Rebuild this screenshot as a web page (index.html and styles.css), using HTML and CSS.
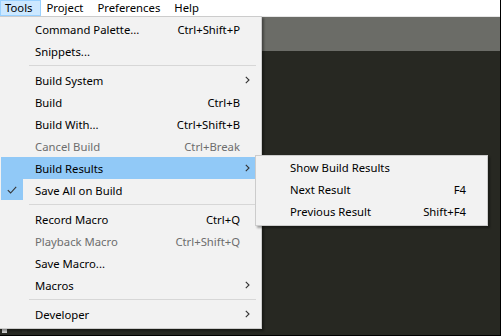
FILE: index.html
```html
<!DOCTYPE html>
<html lang="en">
<head>
  <meta charset="UTF-8">
  <title>Tools menu</title>
  <link rel="stylesheet" href="styles.css">
</head>
<body>
  <div class="window">
    <div class="menubar">
      <span class="menubar-item active">Tools</span>
      <span class="menubar-item">Project</span>
      <span class="menubar-item">Preferences</span>
      <span class="menubar-item">Help</span>
    </div>
    <div class="tabbar"></div>
    <div class="editor">
      <span class="corner"></span>
    </div>

    <div class="menu main-menu">
      <div class="item"><span class="label">Command Palette...</span><span class="key">Ctrl+Shift+P</span></div>
      <div class="item"><span class="label">Snippets...</span></div>
      <div class="sep"></div>
      <div class="item"><span class="label">Build System</span><span class="arrow"><svg width="5" height="8" viewBox="0 0 5 8"><path d="M0.8 0.8 L4 4 L0.8 7.2" fill="none" stroke="#333" stroke-width="1.1"/></svg></span></div>
      <div class="item"><span class="label">Build</span><span class="key">Ctrl+B</span></div>
      <div class="item"><span class="label">Build With...</span><span class="key">Ctrl+Shift+B</span></div>
      <div class="item disabled"><span class="label">Cancel Build</span><span class="key">Ctrl+Break</span></div>
      <div class="item hover"><span class="label">Build Results</span><span class="arrow"><svg width="5" height="8" viewBox="0 0 5 8"><path d="M0.8 0.8 L4 4 L0.8 7.2" fill="none" stroke="#333" stroke-width="1.1"/></svg></span></div>
      <div class="item checked">
        <span class="check"><svg width="10" height="8" viewBox="0 0 10 8"><path d="M0.8 4.2 L3.6 7 L9.2 0.8" fill="none" stroke="#333" stroke-width="1.1"/></svg></span>
        <span class="label">Save All on Build</span>
      </div>
      <div class="sep"></div>
      <div class="item"><span class="label">Record Macro</span><span class="key">Ctrl+Q</span></div>
      <div class="item disabled"><span class="label">Playback Macro</span><span class="key">Ctrl+Shift+Q</span></div>
      <div class="item"><span class="label">Save Macro...</span></div>
      <div class="item"><span class="label">Macros</span><span class="arrow"><svg width="5" height="8" viewBox="0 0 5 8"><path d="M0.8 0.8 L4 4 L0.8 7.2" fill="none" stroke="#333" stroke-width="1.1"/></svg></span></div>
      <div class="sep"></div>
      <div class="item"><span class="label">Developer</span><span class="arrow"><svg width="5" height="8" viewBox="0 0 5 8"><path d="M0.8 0.8 L4 4 L0.8 7.2" fill="none" stroke="#333" stroke-width="1.1"/></svg></span></div>
    </div>

    <div class="menu sub-menu">
      <div class="item"><span class="label">Show Build Results</span></div>
      <div class="item"><span class="label">Next Result</span><span class="key">F4</span></div>
      <div class="item"><span class="label">Previous Result</span><span class="key">Shift+F4</span></div>
    </div>
  </div>
</body>
</html>
```

FILE: styles.css
```css
body {
  margin: 0;
  padding: 0;
  font-family: "Noto Sans", "Open Sans", sans-serif;
  font-size: 11.3px;
  color: #000;
}

.window {
  position: relative;
  display: flex;
  flex-direction: column;
  width: 500px;
  height: 335px;
  border-right: 1px solid #000;
  border-bottom: 1px solid #000;
  overflow: hidden;
  background: #272822;
}

.menubar {
  display: flex;
  height: 16px;
  background: #fff;
  line-height: 14px;
}

.menubar-item {
  padding: 0 7px 0 5px;
  border: 1px solid transparent;
}

.menubar-item:first-child {
  padding-left: 4px;
}

.menubar-item.active {
  background: #cce8ff;
  border-color: #99d1ff;
}

.tabbar {
  height: 34px;
  background: #6b6c67;
  border-top: 1px solid #e6e6e6;
}

.editor {
  flex: 1;
  display: flex;
  align-items: flex-end;
  padding: 0 0 2px 2px;
  background: #272822;
}

.corner {
  width: 5px;
  height: 4px;
  background: #cfcfcf;
}

.menu {
  position: absolute;
  background: #f2f2f2;
  border: 1px solid #cccccc;
  box-shadow: 2px 2px 2px rgba(0, 0, 0, 0.35);
}

.main-menu {
  left: -1px;
  top: 16px;
  width: 261px;
  padding: 1px 0 3px;
}

.sub-menu {
  left: 255px;
  top: 155px;
  width: 231px;
  padding: 0 0 3px;
}

.item {
  display: flex;
  align-items: center;
  height: 22px;
  padding-left: 34px;
  padding-right: 21px;
  position: relative;
}

.main-menu .item {
  padding-right: 20px;
  margin: 0 1px 0 1px;
}

.label {
  flex: 1;
}

.key {
  text-align: right;
}

.arrow {
  position: absolute;
  right: 10px;
  top: 7px;
  display: flex;
}

.check {
  position: absolute;
  left: 0;
  top: 0;
  width: 22px;
  height: 21px;
  display: flex;
  align-items: center;
  justify-content: center;
  background: #91c9f7;
}

.item.hover {
  background: #91c9f7;
}

.item.disabled {
  color: #6d6d6d;
}

.sep {
  height: 1px;
  margin: 3px 5px 3px 29px;
  background: #d7d7d7;
}
```
